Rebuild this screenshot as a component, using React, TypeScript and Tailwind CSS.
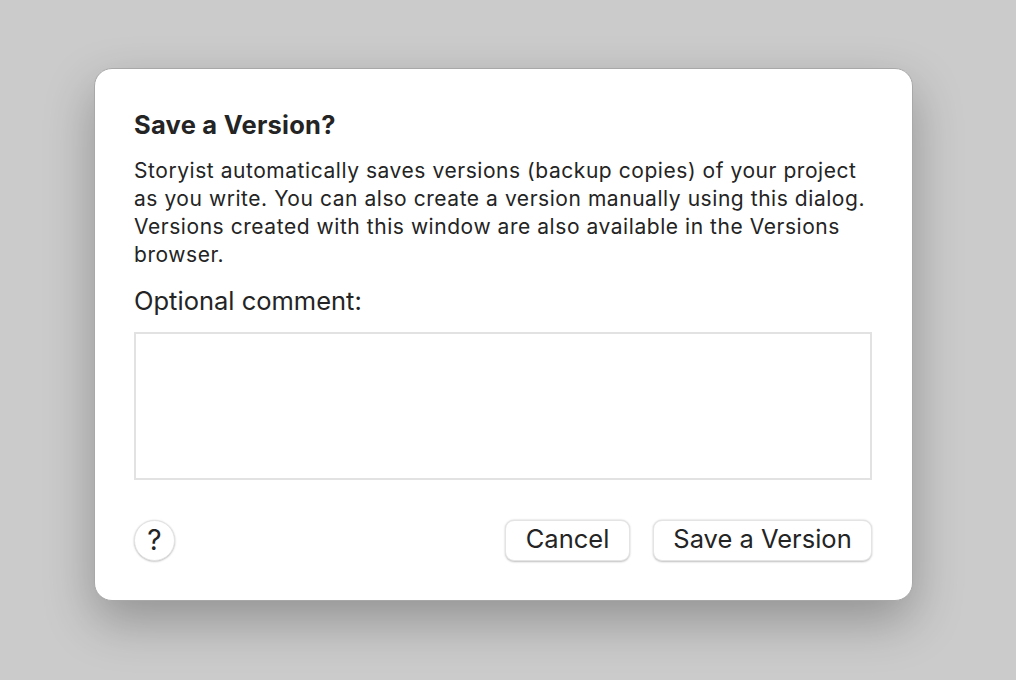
import React from "react";

export default function App() {
  return (
    <div
      className="w-[1016px] h-[680px] bg-[#cbcbcb] flex items-start justify-start pl-[94px] pt-[68px]"
      style={{ fontFamily: "Inter, 'Noto Sans', sans-serif" }}
    >
      <div className="w-[819px] h-[533px] bg-white rounded-[18px] border border-[#a8a8a8] shadow-[0_20px_50px_rgba(0,0,0,0.28)] flex flex-col pl-[39px] pr-[39px] pt-[41px] text-[#242424]">
        <h1 className="text-[25.5px] font-bold leading-[30px] tracking-[0.25px]">Save a Version?</h1>
        <p className="mt-[17px] text-[21px] leading-[28px] whitespace-nowrap tracking-[0.55px]">
          Storyist automatically saves versions (backup copies) of your project
          <br />
          as you write. You can also create a version manually using this dialog.
          <br />
          Versions created with this window are also available in the Versions
          <br />
          browser.
        </p>
        <div className="mt-[16px] text-[25.5px] leading-[32px]">Optional comment:</div>
        <textarea className="mt-[15px] h-[148px] w-[738px] border-2 border-[#e2e2e2] outline-none resize-none" />
        <div className="mt-[40px] flex items-center w-[738px]">
          <button className="w-[41px] h-[41px] rounded-full bg-white shadow-[0_0.5px_2px_rgba(0,0,0,0.3)] border border-[#e4e4e4] flex items-center justify-center text-[28px] leading-none pb-[1px]">
            ?
          </button>
          <div className="ml-auto flex gap-[23px]">
            <button className="w-[125px] h-[41px] rounded-[9px] bg-white border border-[#e4e4e4] shadow-[0_0.5px_2px_rgba(0,0,0,0.25)] text-[25.5px] leading-none pb-[3px]">
              Cancel
            </button>
            <button className="w-[219px] h-[41px] rounded-[9px] bg-white border border-[#e4e4e4] shadow-[0_0.5px_2px_rgba(0,0,0,0.25)] text-[25.5px] leading-none pb-[3px]">
              Save a Version
            </button>
          </div>
        </div>
      </div>
    </div>
  );
}
